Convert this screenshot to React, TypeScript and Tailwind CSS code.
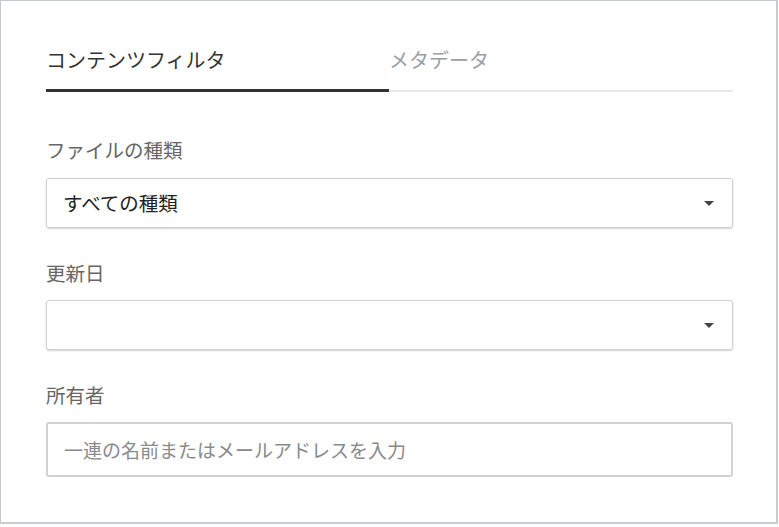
export default function App() {
  return (
    <div className="w-[779px] h-[527px] bg-white" style={{ fontFamily: '"Noto Sans CJK JP", "Noto Sans", sans-serif' }}>
      <div className="w-[778px] h-[524px] bg-white border border-[#c3c8cc] border-r-2 border-b-2 border-r-[#c8cdd1] border-b-[#c8cdd1] px-[45px] pt-[40px]">
        {/* Tabs */}
        <div className="flex w-[687px]">
          <div className="w-[343px] border-b-[3px] border-[#333333] pb-[14px] pt-[4px]">
            <span className="text-[20px] leading-[30px] text-[#333333]">コンテンツフィルタ</span>
          </div>
          <div className="w-[344px] border-b-2 border-[#e8e8e8] pb-[15px] pt-[4px]">
            <span className="text-[20px] leading-[30px] text-[#9a9da3]">メタデータ</span>
          </div>
        </div>

        {/* File type */}
        <div className="mt-[44px] text-[19.5px] leading-[28px] text-[#666666]">ファイルの種類</div>
        <div className="mt-[14px] w-[687px] h-[50px] flex items-center justify-between border border-[#d0d0d0] rounded-[3px] shadow-[0_1px_2px_rgba(0,0,0,0.18)] pl-[16px] pr-[18px]">
          <span className="text-[19.5px] text-[#222222]">すべての種類</span>
          <span className="w-0 h-0 border-l-[5px] border-r-[5px] border-t-[5px] border-l-transparent border-r-transparent border-t-[#444444]" />
        </div>

        {/* Modified */}
        <div className="mt-[31px] text-[19.5px] leading-[28px] text-[#666666]">更新日</div>
        <div className="mt-[13px] w-[687px] h-[50px] flex items-center justify-end border border-[#d0d0d0] rounded-[3px] shadow-[0_1px_2px_rgba(0,0,0,0.18)] pr-[18px]">
          <span className="w-0 h-0 border-l-[5px] border-r-[5px] border-t-[5px] border-l-transparent border-r-transparent border-t-[#444444]" />
        </div>

        {/* Owner */}
        <div className="mt-[31px] text-[19.5px] leading-[28px] text-[#666666]">所有者</div>
        <input
          className="mt-[13px] block w-[687px] h-[55px] border-2 border-[#d2d2d2] rounded-[3px] pl-[16px] text-[19px] text-[#222222] placeholder:text-[#8a8a8a] outline-none"
          placeholder="一連の名前またはメールアドレスを入力"
        />
      </div>
    </div>
  );
}
